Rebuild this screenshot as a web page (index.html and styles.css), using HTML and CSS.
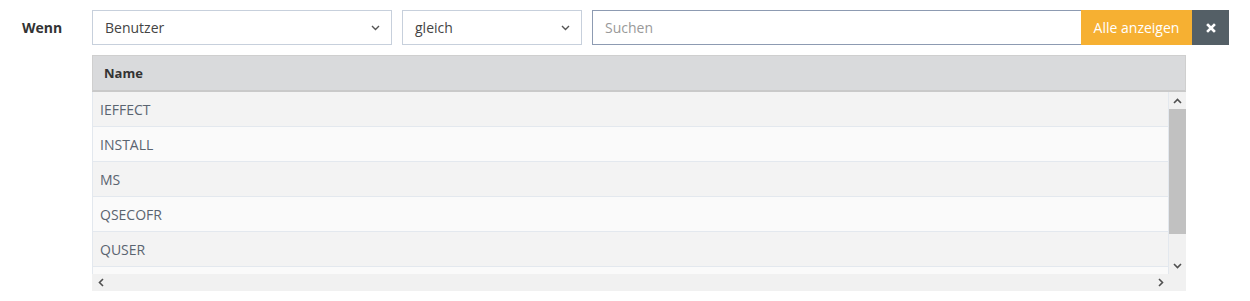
FILE: index.html
```html
<!DOCTYPE html>
<html lang="de">
<head>
<meta charset="UTF-8">
<title>Filter</title>
<link rel="stylesheet" href="styles.css">
</head>
<body>
<div class="filter-row">
    <label class="label">Wenn</label>
    <div class="controls">
        <div class="fake-select field-user">
            <span>Benutzer</span>
            <svg class="chev" width="9" height="6" viewBox="0 0 9 6"><path d="M1 1l3.5 3.5L8 1" fill="none" stroke="#555" stroke-width="1.4"/></svg>
        </div>
        <div class="fake-select field-op">
            <span>gleich</span>
            <svg class="chev" width="9" height="6" viewBox="0 0 9 6"><path d="M1 1l3.5 3.5L8 1" fill="none" stroke="#555" stroke-width="1.4"/></svg>
        </div>
        <div class="search-group">
            <input class="search" type="text" placeholder="Suchen">
            <button class="btn-all">Alle anzeigen</button>
            <button class="btn-clear">
                <svg width="10" height="10" viewBox="0 0 10 10"><path d="M2 2l6 6M8 2l-6 6" stroke="#fff" stroke-width="2.6" stroke-linecap="square"/></svg>
            </button>
        </div>
    </div>
</div>

<div class="table-wrap">
    <div class="grid">
        <div class="grid-head">Name</div>
        <div class="grid-body">
            <div class="rows">
                <div class="row">IEFFECT</div>
                <div class="row">INSTALL</div>
                <div class="row">MS</div>
                <div class="row">QSECOFR</div>
                <div class="row">QUSER</div>
                <div class="row"></div>
            </div>
            <div class="vscroll">
                <div class="arrow"><svg width="9" height="6" viewBox="0 0 9 6"><path d="M1 5l3.5-3.5L8 5" fill="none" stroke="#505050" stroke-width="1.6"/></svg></div>
                <div class="track"><div class="thumb"></div></div>
                <div class="arrow"><svg width="9" height="6" viewBox="0 0 9 6"><path d="M1 1l3.5 3.5L8 1" fill="none" stroke="#505050" stroke-width="1.6"/></svg></div>
            </div>
        </div>
        <div class="hscroll">
            <div class="arrow"><svg width="6" height="9" viewBox="0 0 6 9"><path d="M5 1L1.5 4.5 5 8" fill="none" stroke="#505050" stroke-width="1.6"/></svg></div>
            <div class="htrack"></div>
            <div class="arrow"><svg width="6" height="9" viewBox="0 0 6 9"><path d="M1 1l3.5 3.5L1 8" fill="none" stroke="#505050" stroke-width="1.6"/></svg></div>
            <div class="corner"></div>
        </div>
    </div>
</div>
</body>
</html>
```

FILE: styles.css
```css
body {
    margin: 0;
    font-family: 'Open Sans', sans-serif;
    font-size: 14px;
    color: #333;
    background: #fff;
}

.filter-row {
    display: flex;
    align-items: center;
    padding: 10px 0 0 22px;
}

.label {
    width: 70px;
    font-weight: bold;
    font-size: 14px;
    color: #333;
}

.controls {
    display: flex;
    gap: 10px;
}

.fake-select {
    box-sizing: border-box;
    height: 35px;
    border: 1px solid #c7d0dc;
    display: flex;
    align-items: center;
    justify-content: space-between;
    padding: 0 11px 0 12px;
    color: #444;
}

.field-user { width: 300px; }
.field-op { width: 180px; }

.chev { margin-top: 1px; }

.search-group {
    display: flex;
}

.search {
    box-sizing: border-box;
    width: 489px;
    height: 35px;
    border: 1px solid #8d9bb2;
    border-right: none;
    padding: 0 12px;
    font-family: 'Open Sans', sans-serif;
    font-size: 14px;
    outline: none;
}

.search::placeholder {
    color: #999;
}

.btn-all {
    height: 35px;
    width: 111px;
    border: none;
    background: #f6b032;
    color: #fff;
    font-family: 'Open Sans', sans-serif;
    font-size: 14px;
    padding: 0;
}

.btn-clear {
    height: 35px;
    width: 37px;
    border: none;
    background: #545f66;
    padding: 0;
    display: flex;
    align-items: center;
    justify-content: center;
}

.table-wrap {
    padding: 10px 0 0 92px;
}

.grid {
    width: 1094px;
    box-sizing: border-box;
}

.grid-head {
    height: 37px;
    box-sizing: border-box;
    background: #d9dadc;
    border: 1px solid #cfcfcf;
    border-bottom: 2px solid #c9c9c9;
    display: flex;
    align-items: center;
    padding-left: 11px;
    font-weight: bold;
    font-size: 13px;
    color: #333;
}

.grid-body {
    display: flex;
    height: 182px;
}

.rows {
    flex: 1;
    overflow: hidden;
    border-left: 1px solid #e3e8ee;
    border-right: 1px solid #e3e8ee;
}

.row {
    height: 35px;
    box-sizing: border-box;
    border-bottom: 1px solid #e3e8ee;
    display: flex;
    align-items: center;
    padding-left: 7px;
    color: #5a6470;
    background: #f3f3f3;
}

.row:nth-child(even) {
    background: #fafafa;
}

.vscroll {
    width: 17px;
    background: #f1f1f1;
    display: flex;
    flex-direction: column;
}

.arrow {
    height: 17px;
    width: 17px;
    display: flex;
    align-items: center;
    justify-content: center;
    flex-shrink: 0;
}

.track {
    flex: 1;
}

.thumb {
    height: 125px;
    background: #c1c1c1;
}

.hscroll {
    display: flex;
    height: 17px;
    background: #f1f1f1;
}

.htrack {
    flex: 1;
}

.corner {
    width: 17px;
    background: #f1f1f1;
}
```
